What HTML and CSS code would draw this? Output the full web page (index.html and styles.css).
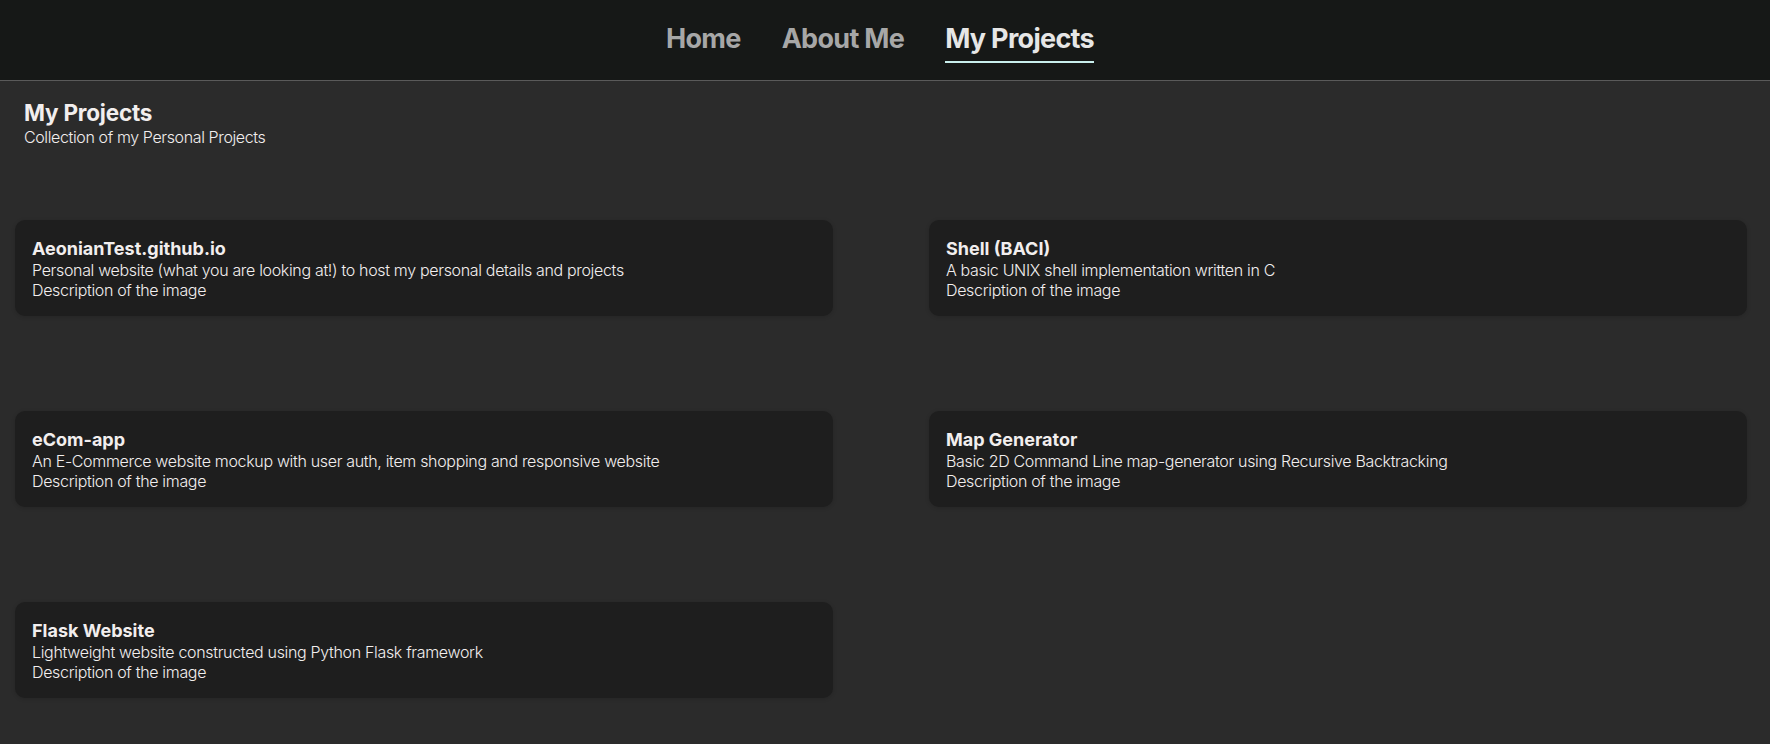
FILE: index.html
```html
<!DOCTYPE html>
<html lang="en">
<head>
<meta charset="utf-8">
<title>My Projects</title>
<link rel="stylesheet" href="styles.css">
</head>
<body>
<nav class="topnav">
  <a class="nav-link" href="#">Home</a>
  <a class="nav-link" href="#">About Me</a>
  <a class="nav-link active" href="#">My Projects</a>
</nav>
<main class="page">
  <header class="page-head">
    <h1 class="page-title">My Projects</h1>
    <p class="page-sub">Collection of my Personal Projects</p>
  </header>
  <section class="grid">
    <article class="card">
      <h2 class="card-title">AeonianTest.github.io</h2>
      <p class="card-text">Personal website (what you are looking at!) to host my personal details and projects</p>
      <p class="card-text">Description of the image</p>
    </article>
    <article class="card">
      <h2 class="card-title">Shell (BACI)</h2>
      <p class="card-text">A basic UNIX shell implementation written in C</p>
      <p class="card-text">Description of the image</p>
    </article>
    <article class="card">
      <h2 class="card-title">eCom-app</h2>
      <p class="card-text">An E-Commerce website mockup with user auth, item shopping and responsive website</p>
      <p class="card-text">Description of the image</p>
    </article>
    <article class="card">
      <h2 class="card-title">Map Generator</h2>
      <p class="card-text">Basic 2D Command Line map-generator using Recursive Backtracking</p>
      <p class="card-text">Description of the image</p>
    </article>
    <article class="card">
      <h2 class="card-title">Flask Website</h2>
      <p class="card-text">Lightweight website constructed using Python Flask framework</p>
      <p class="card-text">Description of the image</p>
    </article>
  </section>
</main>
</body>
</html>
```

FILE: styles.css
```css
* { box-sizing: border-box; }
html, body {
  margin: 0;
  padding: 0;
  background: #2b2b2b;
  font-family: Inter, "Noto Sans", sans-serif;
  color: #f2eeee;
}
.topnav {
  height: 81px;
  background: #161817;
  border-bottom: 1px solid #5a5a5a;
  display: flex;
  justify-content: center;
  align-items: flex-start;
  gap: 41px;
  padding-top: 20px;
  padding-right: 10px;
}
.nav-link {
  font-size: 27px;
  font-weight: 700;
  color: #a7a7a7;
  text-decoration: none;
  line-height: 37px;
  padding-bottom: 4px;
  border-bottom: 2px solid transparent;
  letter-spacing: -0.7px;
}
.nav-link.active {
  color: #e6e6e6;
  border-bottom-color: #c9efed;
}
.page {
  padding: 0 23px 40px 15px;
}
.page-head {
  padding: 18px 9px 0;
}
.page-title {
  margin: 0;
  font-size: 22.5px;
  line-height: 28px;
  font-weight: 700;
  letter-spacing: -0.2px;
}
.page-sub {
  margin: 0;
  font-size: 16px;
  line-height: 21px;
  font-weight: 300;
  letter-spacing: -0.38px;
}
.grid {
  margin-top: 72px;
  display: grid;
  grid-template-columns: 1fr 1fr;
  column-gap: 96px;
  row-gap: 95px;
}
.card {
  background: #1e1e1e;
  border-radius: 10px;
  padding: 18px 17px 15px;
  height: 96px;
  box-shadow: 0 1px 4px rgba(0,0,0,0.15);
}
.card-title {
  margin: 0;
  font-size: 18px;
  line-height: 22px;
  font-weight: 700;
  letter-spacing: 0;
}
.card-text {
  margin: 0;
  font-size: 16px;
  line-height: 20px;
  font-weight: 300;
  letter-spacing: -0.33px;
}
```
